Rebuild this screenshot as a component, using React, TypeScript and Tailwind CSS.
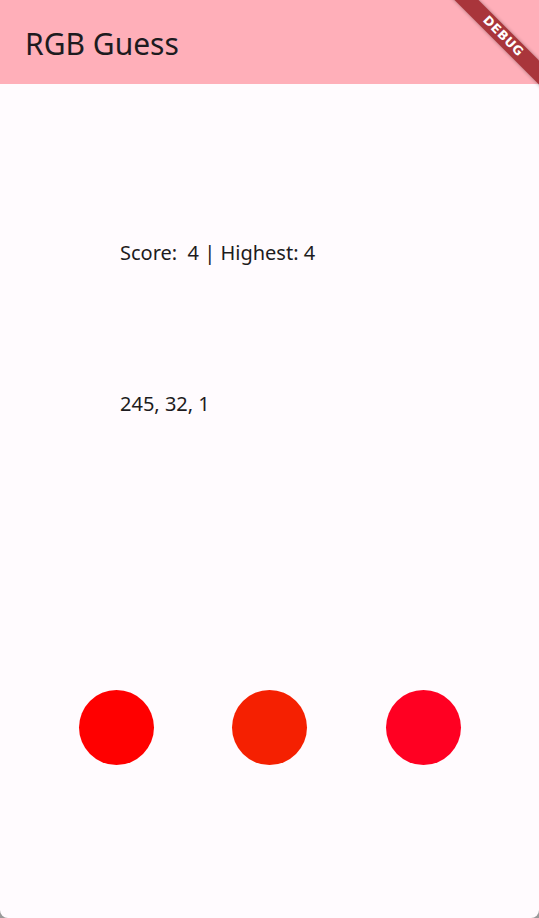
const circles = ["#ff0000", "#f52001", "#ff0022"];

export default function App() {
  return (
    <div className="w-[539px] h-[918px] bg-[#9a9a9a]">
      <div
        className="relative w-full h-full overflow-hidden rounded-b-[8px] bg-[#fffbfe] text-[#1d1b20]"
        style={{ fontFamily: '"Noto Sans", "Open Sans", sans-serif' }}
      >
        {/* App bar */}
        <div className="h-[84px] bg-[#ffafb9] flex items-start pt-[29px] pl-[25px]">
          <span className="text-[30px] leading-[30px]">RGB Guess</span>
        </div>

        {/* Score */}
        <div className="pt-[157px] pl-[120px] text-[20px] leading-[24px]">
          Score:&nbsp; 4 | Highest: 4
        </div>

        {/* Target colour */}
        <div className="pt-[127px] pl-[120px] text-[20px] leading-[24px]">
          245, 32, 1
        </div>

        {/* Choices */}
        <div className="pt-[274px] flex justify-evenly">
          {circles.map((c) => (
            <button
              key={c}
              className="w-[75px] h-[75px] rounded-full"
              style={{ backgroundColor: c }}
            />
          ))}
        </div>

        {/* Debug banner */}
        <div className="absolute top-[27.5px] right-[-29px] w-[130px] h-[17px] rotate-45 bg-[#a9353b] flex items-center justify-center shadow-[0_0_4px_rgba(0,0,0,0.35)]">
          <span
            className="text-[12.5px] font-bold text-white leading-none tracking-[0.5px]"
            style={{ fontFamily: '"DejaVu Sans", sans-serif' }}
          >
            DEBUG
          </span>
        </div>
      </div>
    </div>
  );
}
